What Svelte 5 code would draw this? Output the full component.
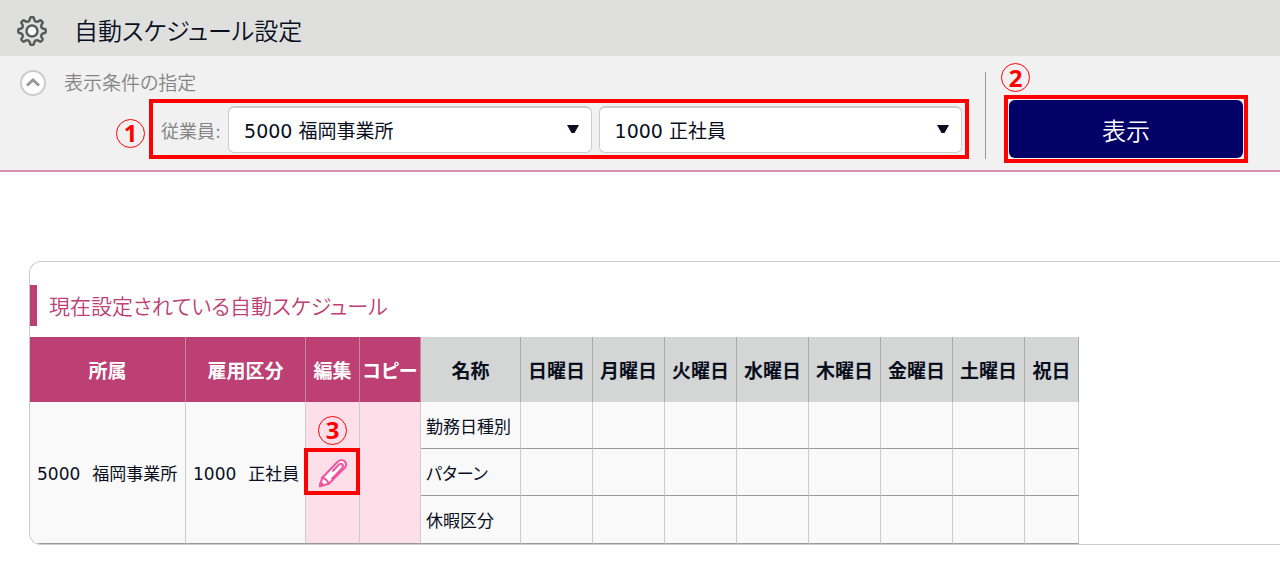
<script lang="ts">
  const offices = ['5000 福岡事業所'];
  const types = ['1000 正社員'];
  let office = $state(offices[0]);
  let type = $state(types[0]);
  let open = $state(true);

  const days = ['日曜日', '月曜日', '火曜日', '水曜日', '木曜日', '金曜日', '土曜日', '祝日'];
  const rows = ['勤務日種別', 'パターン', '休暇区分'];

  // Eight rounded teeth around the hub of the settings gear.
  function gearPath(c: number, inner: number, outer: number, teeth: number) {
    const at = (r: number, deg: number) => {
      const a = (deg * Math.PI) / 180;
      return `${(c + r * Math.sin(a)).toFixed(2)} ${(c - r * Math.cos(a)).toFixed(2)}`;
    };
    const step = 360 / teeth;
    let d = `M${at(inner, -13)}`;
    for (let i = 0; i < teeth; i++) {
      const a = i * step;
      d += `L${at(outer - 1, a - 9)}Q${at(outer, a - 8)} ${at(outer, a - 5)}L${at(outer, a + 5)}Q${at(outer, a + 8)} ${at(outer - 1, a + 9)}L${at(inner, a + 13)}`;
      d += `Q${at(inner - 1.5, a + step / 2)} ${at(inner, a + step - 13)}`;
    }
    return d + 'Z';
  }
  const gear = gearPath(16, 11, 13.8, 8);
</script>

<div class="page">
  <header class="titlebar">
    <svg class="gear" viewBox="0 0 32 32" aria-hidden="true">
      <path d={gear} />
      <circle cx="16" cy="16" r="5.5" />
    </svg>
    <h1>自動スケジュール設定</h1>
  </header>

  <form class="conditions" onsubmit={(e) => e.preventDefault()}>
    <div class="left">
      <div class="caption">
        <button type="button" class="toggle" aria-label="表示条件の指定" aria-expanded={open} onclick={() => (open = !open)}>
          <svg viewBox="0 0 22 22" aria-hidden="true"><path d="M5 13.500l6-5.500 6 5.500" /></svg>
        </button>
        <h2>表示条件の指定</h2>
      </div>
      <div class="filters">
        <span class="badge">1</span>
        <div class="marked fields">
          <label for="office">従業員:</label>
          <div class="select">
            <select id="office" bind:value={office}>
              {#each offices as o}<option>{o}</option>{/each}
            </select>
            <svg viewBox="0 0 12 9" aria-hidden="true"><path d="M0 0h12l-4.500 8h-3z" /></svg>
          </div>
          <div class="select">
            <select aria-label="従業員" bind:value={type}>
              {#each types as t}<option>{t}</option>{/each}
            </select>
            <svg viewBox="0 0 12 9" aria-hidden="true"><path d="M0 0h12l-4.500 8h-3z" /></svg>
          </div>
        </div>
      </div>
    </div>
    <div class="divider"></div>
    <div class="marked submit">
      <span class="badge over">2</span>
      <button type="submit">表示</button>
    </div>
  </form>

  <section class="panel">
    <h2>現在設定されている自動スケジュール</h2>
    <table>
      <colgroup>
        <col class="c-office" /><col class="c-type" /><col class="c-edit" /><col class="c-copy" /><col class="c-name" />
        {#each days as d}<col class={d.length === 3 ? 'c-day' : 'c-holiday'} />{/each}
      </colgroup>
      <thead>
        <tr>
          <th class="main">所属</th>
          <th class="main">雇用区分</th>
          <th class="main">編集</th>
          <th class="main">コピー</th>
          <th>名称</th>
          {#each days as d}<th>{d}</th>{/each}
        </tr>
      </thead>
      <tbody>
        {#each rows as row, i}
          <tr>
            {#if i === 0}
              <td rowspan="3" class="who">5000<span>福岡事業所</span></td>
              <td rowspan="3" class="who">1000<span>正社員</span></td>
              <td rowspan="3" class="pink">
                <div class="edit">
                  <span class="badge over">3</span>
                  <button type="button" aria-label="編集">
                    <svg viewBox="0 0 32 32" aria-hidden="true">
                      <path class="body" d="M2 30l2.500-9L21 4Q25 0.500 28.500 3.500Q31.500 7 28 11L11.500 27.500z" />
                      <path d="M4.500 21Q9.500 22 11.500 27.500M15 22L26 10.500Q27.500 8 25.500 6.500Q24 5.500 22.500 7L16 13.500" />
                      <path class="tip" d="M2 30l1-4 3 3z" />
                    </svg>
                  </button>
                </div>
              </td>
              <td rowspan="3" class="pink"></td>
            {/if}
            <td class="name">{row}</td>
            {#each days as _}<td></td>{/each}
          </tr>
        {/each}
      </tbody>
    </table>
  </section>
</div>

<style>
  :global(body) {
    margin: 0;
    background: #fff;
  }
  .page,
  button,
  select {
    font-family: 'DejaVu Sans', 'Noto Sans CJK JP', sans-serif;
    font-feature-settings: 'palt';
  }
  .page {
    color: #0a0f1e;
    overflow: hidden;
  }
  h1,
  h2 {
    margin: 0;
    font-weight: 350;
  }
  .titlebar {
    display: flex;
    align-items: center;
    gap: 26px;
    height: 56px;
    padding: 6px 16px 0;
    box-sizing: border-box;
    background: #dfdfdd;
  }
  .gear {
    width: 32px;
    height: 32px;
    fill: none;
    stroke: #58595b;
    stroke-width: 2.4;
    stroke-linejoin: round;
  }
  .gear circle {
    fill: #fff;
  }
  h1 {
    padding-top: 2px;
    font-size: 24px;
    line-height: 36px;
  }
  .conditions {
    display: flex;
    align-items: flex-end;
    padding: 10px 32px 11px 20px;
    background: #f1f1f1;
    border-bottom: 2px solid #d98fae;
  }
  .left {
    flex: 1;
    min-width: 0;
  }
  .caption {
    display: flex;
    align-items: center;
    gap: 18px;
    height: 33px;
    color: #858585;
  }
  .caption h2 {
    font-size: 19px;
    line-height: 28px;
  }
  .toggle {
    width: 26px;
    height: 26px;
    padding: 0;
    border: 2px solid #ccc;
    border-radius: 50%;
    background: #fff;
  }
  .toggle svg {
    display: block;
    width: 22px;
    height: 22px;
    fill: none;
    stroke: #999;
    stroke-width: 3;
  }
  .filters {
    display: flex;
    align-items: center;
    gap: 4px;
    padding-left: 96px;
  }
  .badge {
    display: flex;
    align-items: center;
    justify-content: center;
    flex: none;
    box-sizing: border-box;
    width: 29px;
    height: 29px;
    border: 1px solid #f00;
    border-radius: 50%;
    color: #f00;
    font: bold 24px/24px 'Noto Sans', sans-serif;
  }
  .filters > .badge {
    margin-top: 8px;
  }
  .marked {
    box-sizing: border-box;
    border: 4px solid #f00;
  }
  .fields {
    display: flex;
    align-items: center;
    flex: 1;
    gap: 7px;
    height: 60px;
    padding: 0 3px 0 8px;
  }
  label {
    padding-top: 2px;
    color: #858585;
    font-size: 18px;
    white-space: nowrap;
  }
  .select {
    position: relative;
    flex: 1;
  }
  select {
    display: block;
    width: 100%;
    height: 47px;
    padding: 2px 36px 0 15px;
    appearance: none;
    border: 1px solid #ccc;
    border-top-width: 2px;
    border-radius: 6px;
    background: #fff;
    color: #0a0f1e;
    font-size: 19px;
  }
  .select svg {
    position: absolute;
    right: 13px;
    top: 19px;
    width: 12px;
    height: 9px;
    fill: #0a0f1e;
    pointer-events: none;
  }
  .divider {
    width: 1px;
    height: 87px;
    margin: 0 18px 0 16px;
    background: #999;
  }
  .submit {
    position: relative;
    width: 244px;
    height: 68px;
    padding: 1px;
    margin-bottom: -4px;
  }
  .submit .badge {
    left: -7px;
    top: -36px;
  }
  .over {
    position: absolute;
  }
  .submit button {
    display: block;
    width: 100%;
    height: 100%;
    padding: 0;
    border: 0;
    border-radius: 6px;
    background: #000066;
    color: #fff;
    font-size: 24px;
    font-weight: 350;
  }
  .panel {
    margin: 89px 0 0 29px;
    padding-top: 23px;
    border: 1px solid #ccc;
    border-right: 0;
    border-radius: 12px 0 0 12px;
    overflow: hidden;
  }
  .panel h2 {
    margin-bottom: 11px;
    padding: 3px 0 0 12px;
    border-left: 7px solid #bc4074;
    color: #bc4074;
    font-size: 21px;
    line-height: 38px;
  }
  table {
    width: 1049px;
    table-layout: fixed;
    border-collapse: separate;
    border-spacing: 0;
    font-size: 17px;
    white-space: nowrap;
  }
  .c-office { width: 156px; }
  .c-type { width: 120px; }
  .c-edit, .c-holiday { width: 54px; }
  .c-copy { width: 61px; }
  .c-name { width: 100px; }
  .c-day { width: 72px; }
  th {
    box-sizing: border-box;
    height: 65px;
    padding: 0;
    border-right: 1px solid #aaacab;
    background: #d4d6d5;
    font-size: 19px;
    font-weight: 700;
  }
  th.main {
    background: #bc4074;
    border-right-color: #c4889f;
    color: #fff;
  }
  td {
    box-sizing: border-box;
    height: 47px;
    padding: 0;
    border-right: 1px solid #ccc;
    border-bottom: 1px solid #999;
    background: #f9f9f9;
  }
  tbody tr:last-child td {
    height: 48px;
  }
  .who {
    padding-left: 7px;
  }
  .who span {
    margin-left: 12px;
  }
  .name {
    padding-left: 5px;
  }
  .pink {
    background: #fddfea;
  }
  .edit {
    position: relative;
    display: flex;
    justify-content: center;
  }
  .edit::before {
    content: '';
    position: absolute;
    inset: -10px -1px -7px -2px;
    border: 4px solid #f00;
  }
  .edit .badge {
    left: 12px;
    top: -42px;
  }
  .edit button {
    position: relative;
    width: 30px;
    height: 30px;
    padding: 0;
    border: 0;
    background: none;
  }
  .edit svg {
    display: block;
    width: 30px;
    height: 30px;
    fill: none;
    stroke: #f056a0;
    stroke-width: 2.2;
    stroke-linejoin: round;
    stroke-linecap: round;
  }
  .edit .body {
    fill: #fff;
  }
  .edit .tip {
    fill: #f056a0;
  }
</style>
